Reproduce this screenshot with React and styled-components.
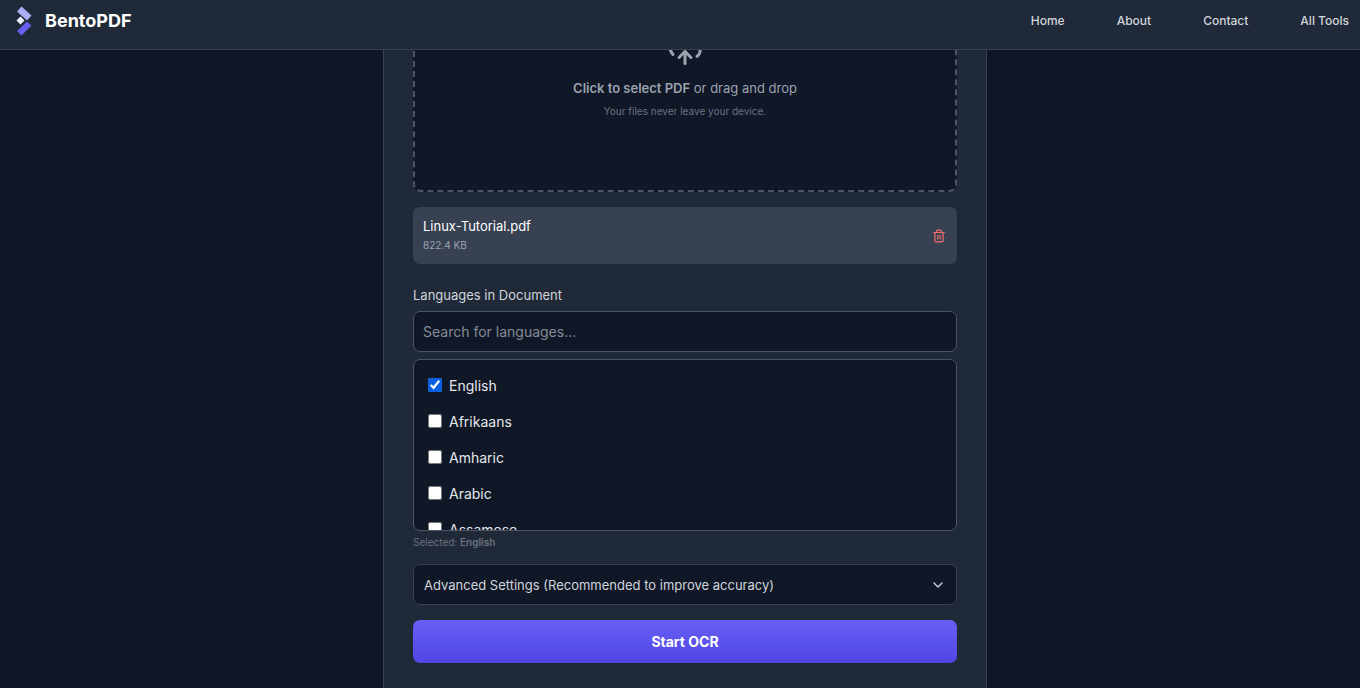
import React, { useState } from 'react';
import styled, { createGlobalStyle } from 'styled-components';
import { ChevronDown, CloudUpload, Trash2 } from 'lucide-react';

const GlobalStyle = createGlobalStyle`
    *, *::before, *::after {
        box-sizing: border-box;
    }
    body {
        margin: 0;
        background: #101726;
        color: #e5e7eb;
        font-family: Inter, "Liberation Sans", sans-serif;
        font-size: 14px;
    }
    button, input {
        font-family: inherit;
    }
`

const Page = styled.div`
    display: flex;
    flex-direction: column;
    height: 100vh;
    overflow: hidden;
`

const Header = styled.header`
    display: flex;
    flex-shrink: 0;
    align-items: center;
    justify-content: space-between;
    height: 50px;
    padding: 0 11px 8px 16px;
    background: #1f2937;
    border-bottom: 1px solid #374151;
    z-index: 1;
`

const Brand = styled.a`
    display: flex;
    align-items: center;
    gap: 13px;
    color: #fff;
    font-size: 18px;
    font-weight: 700;
    text-decoration: none;
`

const Nav = styled.nav`
    display: flex;
    gap: 52px;
`

const NavLink = styled.a`
    color: #d1d5db;
    font-size: 12px;
    font-weight: 500;
    line-height: 18px;
    text-decoration: none;
`

const Main = styled.main`
    flex: 1;
    min-height: 0;
    padding-left: 10px;
`

const Card = styled.section`
    max-width: 604px;
    min-height: 800px;
    margin: -121px auto 0;
    padding: 29px;
    background: #1f2937;
    border: 1px solid #374151;
    border-radius: 12px;
    box-shadow: 0 20px 24px rgba(0, 0, 0, 0.1);
`

const DropZone = styled.button`
    display: flex;
    flex-direction: column;
    align-items: center;
    justify-content: center;
    width: 100%;
    height: 233px;
    background: #101726;
    border: 2px dashed #4b5563;
    border-radius: 8px;
    color: #9ca3af;
    cursor: pointer;
`

const DropText = styled.span`
    margin-top: 11px;
    font-size: 13px;
    line-height: 18px;
    b {
        font-weight: 600;
    }
`

const DropHint = styled.span`
    margin-top: 6px;
    color: #6b7280;
    font-size: 10px;
    line-height: 16px;
`

const FileRow = styled.div`
    display: flex;
    align-items: center;
    justify-content: space-between;
    margin-top: 15px;
    padding: 10px;
    background: #374151;
    border-radius: 7px;
`

const FileName = styled.div`
    color: #fff;
    font-size: 13px;
    line-height: 19px;
`

const FileSize = styled.div`
    color: #9ca3af;
    font-size: 10px;
    line-height: 18px;
`

const RemoveButton = styled.button`
    display: flex;
    padding: 1px;
    background: none;
    border: 0;
    color: #f87171;
    cursor: pointer;
`

const FieldLabel = styled.label`
    display: block;
    margin: 22px 0 7px;
    color: #d1d5db;
    font-size: 13px;
    line-height: 18px;
`

const SearchInput = styled.input`
    display: block;
    width: 100%;
    height: 41px;
    padding: 0 9px;
    background: #101726;
    border: 1px solid #4b5563;
    border-radius: 7px;
    color: #fff;
    font-size: 14px;
    &::placeholder {
        color: #858b97;
    }
`

const LanguageList = styled.div`
    height: 172px;
    margin-top: 7px;
    padding: 7px;
    overflow: hidden;
    background: #101726;
    border: 1px solid #4b5563;
    border-radius: 7px;
`

const LanguageItem = styled.label`
    display: flex;
    align-items: center;
    gap: 7px;
    height: 36px;
    padding: 0 7px;
    font-size: 14px;
    cursor: pointer;
    input {
        width: 14px;
        height: 14px;
        margin: 0;
        accent-color: #0b60e0;
    }
`

const Selected = styled.p`
    margin: 3px 0 14px;
    color: #6b7280;
    font-size: 10px;
    line-height: 16px;
    strong {
        font-weight: 600;
    }
`

const Advanced = styled.button`
    display: flex;
    align-items: center;
    justify-content: space-between;
    width: 100%;
    height: 41px;
    padding: 0 10px;
    background: #101726;
    border: 1px solid #374151;
    border-radius: 7px;
    color: #d1d5db;
    font-size: 13px;
    cursor: pointer;
`

const StartButton = styled.button`
    width: 100%;
    height: 43px;
    margin-top: 15px;
    background: linear-gradient(to bottom, #6860f5, #4f46e5);
    border: 0;
    border-radius: 7px;
    color: #fff;
    font-size: 14px;
    font-weight: 700;
    cursor: pointer;
`

const languages = ['English', 'Afrikaans', 'Amharic', 'Arabic', 'Assamese'];

const Logo = () => (
    <svg width="16" height="30" viewBox="0 0 16 30" aria-hidden="true">
        <path d="M5.5 0.5 15.5 9.5 11 14.5 1 5.5z" fill="#a9aef5" />
        <path d="M4.5 10.5 8.5 14.5 4.5 18.5 0.5 14.5z" fill="#f1f3ff" />
        <path d="M11 15.5 15.5 19.5 5.5 29.5 1 25z" fill="#665ff0" />
    </svg>
)

const App = () => {
    const [checked, setChecked] = useState(['English']);
    const [query, setQuery] = useState('');
    const toggle = (name) => setChecked(
        checked.includes(name) ? checked.filter(n => n !== name) : [...checked, name]
    );
    const visible = languages.filter(n => n.toLowerCase().includes(query.toLowerCase()));

    return (
        <Page>
            <GlobalStyle />
            <Header>
                <Brand href="#"><Logo />BentoPDF</Brand>
                <Nav>
                    <NavLink href="#home">Home</NavLink>
                    <NavLink href="#about">About</NavLink>
                    <NavLink href="#contact">Contact</NavLink>
                    <NavLink href="#tools">All Tools</NavLink>
                </Nav>
            </Header>
            <Main>
                <Card>
                    <DropZone type="button">
                        <CloudUpload size={36} />
                        <DropText><b>Click to select PDF</b> or drag and drop</DropText>
                        <DropHint>Your files never leave your device.</DropHint>
                    </DropZone>
                    <FileRow>
                        <div>
                            <FileName>Linux-Tutorial.pdf</FileName>
                            <FileSize>822.4 KB</FileSize>
                        </div>
                        <RemoveButton type="button" aria-label="Remove file"><Trash2 size={14} /></RemoveButton>
                    </FileRow>
                    <FieldLabel htmlFor="lang-search">Languages in Document</FieldLabel>
                    <SearchInput
                        id="lang-search"
                        type="text"
                        placeholder="Search for languages..."
                        value={query}
                        onChange={e => setQuery(e.target.value)}
                    />
                    <LanguageList>
                        {visible.map(name => (
                            <LanguageItem key={name}>
                                <input type="checkbox" checked={checked.includes(name)} onChange={() => toggle(name)} />
                                {name}
                            </LanguageItem>
                        ))}
                    </LanguageList>
                    <Selected>Selected: <strong>{checked.join(', ') || 'None'}</strong></Selected>
                    <Advanced type="button">
                        Advanced Settings (Recommended to improve accuracy)
                        <ChevronDown size={16} />
                    </Advanced>
                    <StartButton type="button">Start OCR</StartButton>
                </Card>
            </Main>
        </Page>
    )
}

export default App
